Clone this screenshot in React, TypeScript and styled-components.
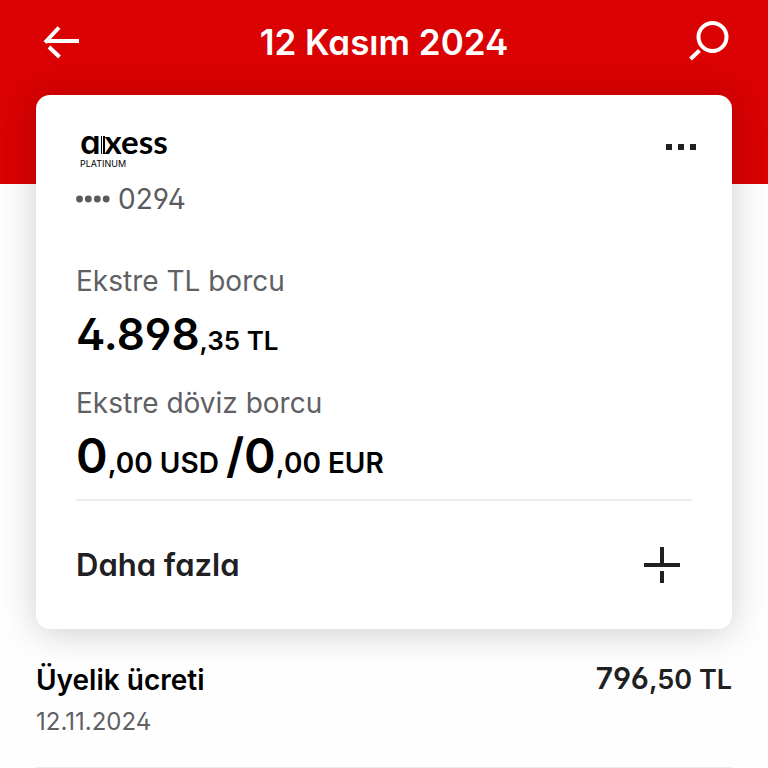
import React from "react";
import styled, { createGlobalStyle } from "styled-components";

const GlobalStyle = createGlobalStyle`
  *, *::before, *::after { box-sizing: border-box; }
  body {
    margin: 0;
    background: #fefefe;
    color: #000;
    font-family: Inter, "Liberation Sans", sans-serif;
    font-feature-settings: "cv11", "cv02", "cv03", "cv04";
    -webkit-font-smoothing: antialiased;
  }
`;

const Screen = styled.div`
  min-height: 100vh;
  overflow: hidden;
`;

const Header = styled.header`
  display: flex;
  align-items: flex-start;
  justify-content: space-between;
  height: 184px;
  padding: 18px 36px 0;
  background: #da0203;
  color: #fff;
`;

const IconButton = styled.button`
  display: grid;
  place-items: center;
  width: 48px;
  height: 48px;
  padding: 0;
  border: 0;
  background: none;
  color: inherit;
  cursor: pointer;
`;

const Title = styled.h1`
  margin: 0;
  font-size: 35px;
  font-weight: 600;
  line-height: 48px;
`;

const Card = styled.section`
  margin: -89px 36px 0;
  padding: 24px 40px 0;
  border-radius: 14px;
  background: #fff;
  box-shadow: 0 4px 36px rgba(0, 0, 0, 0.19);
`;

const CardTop = styled.div`
  display: flex;
  align-items: center;
  justify-content: space-between;
  height: 56px;
  margin-right: -13px;
`;

const Brand = styled.div`
  padding: 0 0 0 4px;
`;

const Wordmark = styled.div`
  display: flex;
  align-items: baseline;
  font-size: 33px;
  font-weight: 600;
  line-height: 32px;
`;

const WordmarkTail = styled.span`
  font-family: Lato, Inter, sans-serif;
  font-weight: 700;
`;

const Tier = styled.div`
  font-size: 9px;
  font-weight: 400;
  line-height: 12px;
`;

const CardNumber = styled.div`
  display: flex;
  align-items: center;
  gap: 8px;
  margin: 8px 0 48px;
  color: #5b5b5f;
  font-size: 28px;
  line-height: 32px;
`;

const Debt = styled.dl`
  margin: 0 0 8px;
`;

const Label = styled.dt`
  color: #606064;
  font-size: 28px;
  line-height: 36px;
`;

const Amount = styled.dd<{ $size: number }>`
  margin: 14px 0 16px;
  font-size: ${(p) => p.$size}px;
  font-weight: 600;
  line-height: 56px;

  &:last-child {
    margin-bottom: 0;
  }
`;

const Major = styled.span<{ $size: number }>`
  font-size: ${(p) => p.$size}px;
  font-weight: 600;
  line-height: 0;
`;

const MoreRow = styled.button`
  display: flex;
  align-items: center;
  justify-content: space-between;
  width: 100%;
  padding: 40px 12px 40px 0;
  border: 0;
  border-top: 2px solid #ececec;
  background: none;
  color: #202022;
  font: inherit;
  font-size: 31px;
  font-weight: 600;
  line-height: 48px;
  cursor: pointer;
`;

const Transactions = styled.ul`
  margin: 31px 36px 0;
  padding: 0;
  list-style: none;
`;

const Transaction = styled.li`
  display: flex;
  justify-content: space-between;
  padding-bottom: 27px;
  border-bottom: 1px solid #ececec;
`;

const Name = styled.div`
  font-size: 28px;
  font-weight: 600;
  line-height: 40px;
`;

const DateText = styled.time`
  display: block;
  margin-top: 4px;
  color: #606064;
  font-size: 24px;
  line-height: 36px;
`;

const Price = styled.div`
  color: #202022;
  font-size: 27px;
  font-weight: 600;
  line-height: 40px;
`;

const BackIcon = () => (
  <svg width="38" height="34" viewBox="0 0 38 34" fill="none" stroke="currentColor" strokeWidth="4" aria-hidden="true">
    <path d="M38 16H5M4 17.5L18 2.5M8 22L18.5 32" />
  </svg>
);

const SearchIcon = () => (
  <svg width="42" height="42" viewBox="0 0 42 42" fill="none" stroke="currentColor" strokeWidth="4" aria-hidden="true">
    <circle cx="25.5" cy="16" r="14" />
    <path d="M12.5 29.5L3.5 38" />
  </svg>
);

const DotsIcon = () => (
  <svg width="30" height="6" viewBox="0 0 30 6" fill="#202022" aria-hidden="true">
    <rect width="6" height="6" />
    <rect x="12" width="6" height="6" />
    <rect x="24" width="6" height="6" />
  </svg>
);

const PlusIcon = () => (
  <svg width="36" height="36" viewBox="0 0 36 36" fill="none" stroke="currentColor" strokeWidth="4" aria-hidden="true">
    <path d="M0 18H36M18 0V18M18 24V36" />
  </svg>
);

const LogoBars = () => (
  <svg width="4" height="18" viewBox="0 0 4 18" fill="#000" aria-hidden="true">
    <rect x="0" width="1" height="18" />
    <rect x="2" width="2" height="18" />
  </svg>
);

const MaskDots = () => (
  <svg width="34" height="8" viewBox="0 0 34 8" fill="currentColor" aria-hidden="true">
    <circle cx="3.5" cy="4" r="3.4" />
    <circle cx="12.3" cy="4" r="3.4" />
    <circle cx="21.3" cy="4" r="3.4" />
    <circle cx="30.2" cy="4" r="3.4" />
  </svg>
);

export default function App() {
  return (
    <Screen>
      <GlobalStyle />
      <Header>
        <IconButton aria-label="Geri"><BackIcon /></IconButton>
        <Title>12 Kasım 2024</Title>
        <IconButton aria-label="Ara"><SearchIcon /></IconButton>
      </Header>
      <Card>
        <CardTop>
          <Brand>
            <Wordmark><span>a</span><LogoBars /><WordmarkTail>xess</WordmarkTail></Wordmark>
            <Tier>PLATINUM</Tier>
          </Brand>
          <IconButton aria-label="Seçenekler"><DotsIcon /></IconButton>
        </CardTop>
        <CardNumber><MaskDots /><span>0294</span></CardNumber>
        <Debt>
          <Label>Ekstre TL borcu</Label>
          <Amount $size={26}><Major $size={44}>4.898</Major>,35 TL</Amount>
          <Label>Ekstre döviz borcu</Label>
          <Amount $size={28}>
            <Major $size={48}>0</Major>,00 USD <Major $size={48}>/0</Major>,00 EUR
          </Amount>
        </Debt>
        <MoreRow><span>Daha fazla</span><PlusIcon /></MoreRow>
      </Card>
      <Transactions>
        <Transaction>
          <div>
            <Name>Üyelik ücreti</Name>
            <DateText dateTime="2024-11-12">12.11.2024</DateText>
          </div>
          <Price><Major $size={30}>796</Major>,50 TL</Price>
        </Transaction>
      </Transactions>
    </Screen>
  );
}
